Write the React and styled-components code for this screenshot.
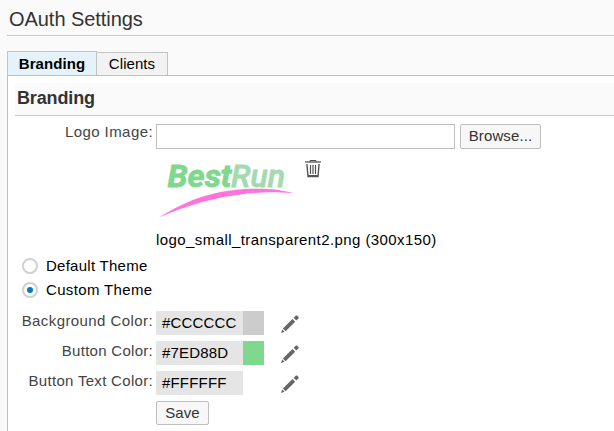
import React from "react";
import styled, { createGlobalStyle } from "styled-components";

const GlobalStyle = createGlobalStyle`
  * { box-sizing: border-box; }
  body {
    margin: 0;
    background: #fafafa;
    overflow: hidden;
    font-family: "Liberation Sans", Arial, sans-serif;
    font-size: 15px;
    color: #000;
  }
`;

const Page = styled.main`
  display: flex;
  flex-direction: column;
  height: 431px;
  padding-left: 7px;
  overflow: hidden;
`;

const Title = styled.h1`
  height: 36px;
  margin: 0;
  padding-left: 2px;
  border-bottom: 1px solid #c8c8c8;
  font-size: 20px;
  font-weight: 400;
  line-height: 38px;
  letter-spacing: -0.05px;
  color: #333;
`;

const Tabs = styled.div`
  display: flex;
  align-items: flex-end;
  height: 39px;
`;

const Tab = styled.div`
  width: ${(p) => (p.$active ? 90 : 71)}px;
  height: ${(p) => (p.$active ? 24 : 23)}px;
  border: 1px solid #c4c4c4;
  border-bottom: 0;
  border-left-width: ${(p) => (p.$active ? 1 : 0)}px;
  background: ${(p) => (p.$active ? "#e5f2fa" : "#f2f2f2")};
  font-weight: ${(p) => (p.$active ? 700 : 400)};
  line-height: ${(p) => (p.$active ? 24 : 22)}px;
  letter-spacing: 0.07px;
  text-align: center;
`;

const Panel = styled.section`
  flex: 1;
  padding: 7px 0 0 7px;
  border: 1px solid #bfbfbf;
  border-width: 1px 0 0 1px;
  background: #fff;
`;

const SectionTitle = styled.h2`
  height: 33px;
  margin: 0 0 8px;
  padding-left: 2px;
  border-bottom: 1px solid #c8c8c8;
  background: #fafafa;
  font-size: 18px;
  line-height: 30px;
  letter-spacing: -0.13px;
  color: #333;
`;

const Row = styled.div`
  display: grid;
  grid-template-columns: 138px auto;
  column-gap: 3px;
  margin-bottom: ${(p) => p.$gap || 0}px;
`;

const Label = styled.label`
  color: #444;
  line-height: ${(p) => p.$line || 20}px;
  letter-spacing: ${(p) => p.$spacing || 0}px;
  text-align: right;
  white-space: nowrap;
`;

const Controls = styled.div`
  display: flex;
`;

const FileInput = styled.input`
  width: 299px;
  height: 25px;
  margin-right: 5px;
  border: 1px solid #bfbfbf;
  background: #fff;
`;

const Button = styled.button`
  width: ${(p) => p.$width}px;
  height: ${(p) => p.$height}px;
  padding: 0 0 ${(p) => p.$lift || 0}px;
  border: 1px solid #bfbfbf;
  border-radius: 2px;
  background: #f7f7f7;
  color: #333;
  font: inherit;
  letter-spacing: 0.12px;
  line-height: 20px;
`;

const Preview = styled.div`
  display: flex;
  height: 81px;
`;

const Logo = styled.svg`
  width: 148px;
  height: 75px;
`;

const TrashIcon = styled.svg`
  width: 18px;
  height: 20px;
  margin-top: 11px;
`;

const FileName = styled.div`
  height: 23px;
  line-height: 20px;
  letter-spacing: 0.42px;
`;

const Radio = styled.div`
  display: flex;
  align-items: center;
  gap: 8px;
  height: ${(p) => p.$height}px;
  padding-left: 7px;
  line-height: 17px;
  letter-spacing: ${(p) => p.$spacing || 0}px;
`;

const RadioText = styled.span`
  padding-bottom: ${(p) => p.$lift || 0}px;
`;

const RadioMark = styled.span`
  display: grid;
  place-items: center;
  width: 16px;
  height: 16px;
  border: 2px solid #d0d0d0;
  border-radius: 50%;

  &::after {
    content: "";
    width: 6px;
    height: 6px;
    border-radius: 50%;
    background: ${(p) => (p.$checked ? "#007cc0" : "transparent")};
  }
`;

const Colors = styled.div`
  padding-top: 9px;
`;

const ColorValue = styled.div`
  width: 87px;
  height: 24px;
  padding-left: 6px;
  background: #e5e5e5;
  line-height: 23px;
  letter-spacing: 0.18px;
`;

const Swatch = styled.div`
  width: 21px;
  height: 24px;
  margin-right: 16px;
  background: ${(p) => p.$color};
`;

const PencilIcon = styled.svg`
  width: 20px;
  height: 20px;
  margin-top: 3px;
`;

const colors = [
  { label: "Background Color:", value: "#CCCCCC", spacing: 0.42 },
  { label: "Button Color:", value: "#7ED88D", spacing: 0.28 },
  { label: "Button Text Color:", value: "#FFFFFF", spacing: 0.31 },
];

function BestRunLogo() {
  return (
    <Logo viewBox="0 0 148 75" fontFamily="Roboto, sans-serif" fontStyle="italic" fontSize="32">
      <text x="11.5" y="37.5" fontWeight="700" fill="#7ed88d" stroke="#7ed88d" strokeWidth=".8" textLength="64" lengthAdjust="spacingAndGlyphs">Best</text>
      <text x="75" y="37.5" fontWeight="500" fill="#a5d9af" stroke="#a5d9af" strokeWidth=".8" textLength="54" lengthAdjust="spacingAndGlyphs">Run</text>
      <path d="M3 68.5C34 49 61 41 95 39.8C114 39.5 126 41 137 44C119 43 107 43 92 44.6C58 48.5 32 56 3 68.5Z" fill="#ff73dc" />
    </Logo>
  );
}

function Trash() {
  return (
    <TrashIcon viewBox="0 0 18 20" fill="none" stroke="#555">
      <path d="M6 2V.5H12V2" />
      <path d="M1 2H17" strokeWidth="1.3" />
      <path d="M3 4V5L4 16.5H14L15 5V4" strokeWidth="1.4" />
      <path d="M6.5 5V14M9 5V14M11.5 5V14" strokeWidth="1.2" />
      <path d="M4 16H14" strokeWidth="2" />
    </TrashIcon>
  );
}

function Pencil() {
  return (
    <PencilIcon viewBox="0 0 20 20" fill="#666">
      <path d="M1 19L2.2 15.4L4.6 17.8Z" />
      <path d="M2.9 14.6L12.5 5L15.2 7.7L5.6 17.3Z" />
      <path d="M13.7 3.8L15.9 1.6Q16.5 1.2 17 1.6L18.5 3.1Q18.9 3.6 18.5 4.2L16.3 6.4Z" />
    </PencilIcon>
  );
}

export default function App() {
  return (
    <>
      <GlobalStyle />
      <Page>
        <Title>OAuth Settings</Title>
        <Tabs>
          <Tab $active>Branding</Tab>
          <Tab>Clients</Tab>
        </Tabs>
        <Panel>
          <SectionTitle>Branding</SectionTitle>
          <Row>
            <Label htmlFor="logo" $line={16} $spacing={0.42}>Logo Image:</Label>
            <Controls>
              <FileInput id="logo" />
              <Button $width={81} $height={25} $lift={2}>Browse...</Button>
            </Controls>
            <span />
            <Preview>
              <BestRunLogo />
              <Trash />
            </Preview>
            <span />
            <FileName>logo_small_transparent2.png (300x150)</FileName>
          </Row>
          <Radio $height={25} $spacing={0.26}>
            <RadioMark />
            <RadioText>Default Theme</RadioText>
          </Radio>
          <Radio $height={24} $spacing={0.35}>
            <RadioMark $checked />
            <RadioText $lift={2}>Custom Theme</RadioText>
          </Radio>
          <Colors>
            {colors.map(({ label, value, spacing }) => (
              <Row key={value} $gap={6}>
                <Label $spacing={spacing}>{label}</Label>
                <Controls>
                  <ColorValue>{value}</ColorValue>
                  <Swatch $color={value} />
                  <Pencil />
                </Controls>
              </Row>
            ))}
          </Colors>
          <Row>
            <span />
            <Controls><Button $width={53} $height={24}>Save</Button></Controls>
          </Row>
        </Panel>
      </Page>
    </>
  );
}
